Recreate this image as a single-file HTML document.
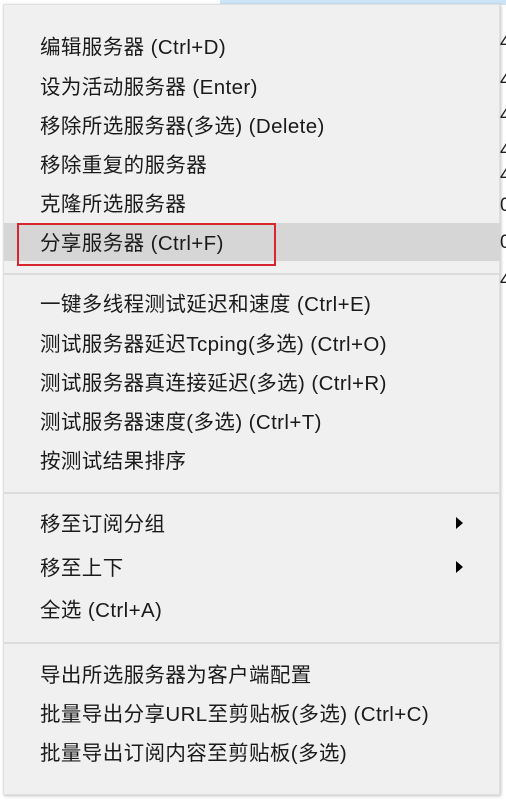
<!DOCTYPE html>
<html><head><meta charset="utf-8"><style>
body{margin:0;width:506px;height:801px;background:#fff;position:relative;overflow:hidden;font-family:"Liberation Sans","Noto Sans CJK SC",sans-serif;}
.topbar{position:absolute;left:220px;top:0;width:286px;height:5px;background:#cce4f7;}
.menu{position:absolute;left:3px;top:4px;width:497px;height:791px;background:#f0f0f0;box-shadow:1px 1px 3px rgba(0,0,0,.25);border:1px solid #e0e0e0;box-sizing:border-box;}
.it{position:absolute;left:40px;font-size:20.5px;letter-spacing:0.4px;color:#1a1a1a;line-height:24px;white-space:nowrap;}
.sep{position:absolute;left:4px;width:496px;height:2px;background:#dcdcdc;}
.hl{position:absolute;left:4px;top:223px;width:496px;height:38px;background:#d6d6d6;}
.red{position:absolute;left:17px;top:223px;width:259px;height:43px;border:2px solid #d8262e;box-sizing:border-box;}
.arr{position:absolute;left:456px;width:0;height:0;border-top:6px solid transparent;border-bottom:6px solid transparent;border-left:7px solid #000;}
.r{position:absolute;left:500px;font-size:19px;color:#222;}
</style></head><body>
<div class="topbar"></div>
<div class="r" style="top:32px">4</div><div class="r" style="top:70px">4</div><div class="r" style="top:105px">4</div><div class="r" style="top:140px">4</div><div class="r" style="top:165px">4</div>
<div class="r" style="top:195px">0</div><div class="r" style="top:232px">0</div><div class="r" style="top:270px">4</div>
<div class="menu"></div>
<div class="hl"></div>
<div class="red"></div>
<div class="it" style="top:36px">编辑服务器 (Ctrl+D)</div>
<div class="it" style="top:76px">设为活动服务器 (Enter)</div>
<div class="it" style="top:115px">移除所选服务器(多选) (Delete)</div>
<div class="it" style="top:154px">移除重复的服务器</div>
<div class="it" style="top:193px">克隆所选服务器</div>
<div class="it" style="top:232px">分享服务器 (Ctrl+F)</div>
<div class="sep" style="top:273px"></div>
<div class="it" style="top:293px">一键多线程测试延迟和速度 (Ctrl+E)</div>
<div class="it" style="top:333px">测试服务器延迟Tcping(多选) (Ctrl+O)</div>
<div class="it" style="top:372px">测试服务器真连接延迟(多选) (Ctrl+R)</div>
<div class="it" style="top:411px">测试服务器速度(多选) (Ctrl+T)</div>
<div class="it" style="top:450px">按测试结果排序</div>
<div class="sep" style="top:492px"></div>
<div class="it" style="top:513px">移至订阅分组</div>
<div class="arr" style="top:517px"></div>
<div class="it" style="top:557px">移至上下</div>
<div class="arr" style="top:561px"></div>
<div class="it" style="top:599px">全选 (Ctrl+A)</div>
<div class="sep" style="top:642px"></div>
<div class="it" style="top:664px">导出所选服务器为客户端配置</div>
<div class="it" style="top:703px">批量导出分享URL至剪贴板(多选) (Ctrl+C)</div>
<div class="it" style="top:742px">批量导出订阅内容至剪贴板(多选)</div>
</body></html>
